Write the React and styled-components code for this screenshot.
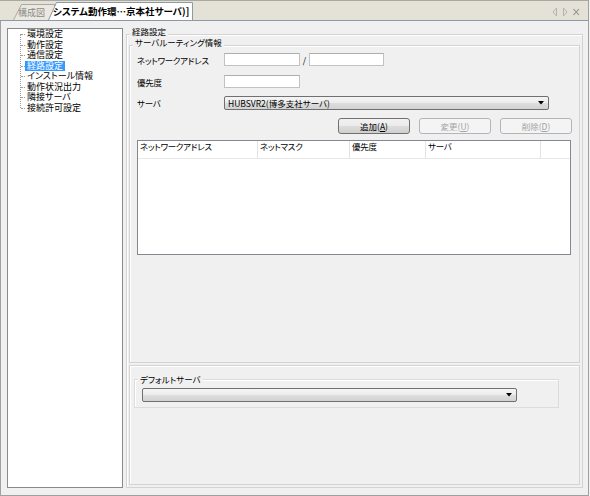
import styled, { createGlobalStyle } from "styled-components";

const GlobalStyle = createGlobalStyle`
  html, body {
    margin: 0;
    padding: 0;
    background: #f0f0f0;
  }
  body {
    font-family: "Noto Sans CJK JP", "Noto Sans", sans-serif;
    font-feature-settings: "palt";
    color: #000;
  }
  * { box-sizing: border-box; }
`;

const treeItems = [
  "環境設定",
  "動作設定",
  "通信設定",
  "経路設定",
  "インストール情報",
  "動作状況出力",
  "隣接サーバ",
  "接続許可設定",
];

const columns = ["ネットワークアドレス", "ネットマスク", "優先度", "サーバ", ""];

/* ── tab strip ── */
function TabShapeSvg({ width, height, fill, stroke }) {
  return (
    <TabShape width={width} height={height} viewBox={`0 0 ${width} ${height}`}>
      <path d={`M0.5 ${height} L8.5 0.5 H${width - 0.5} V${height} Z`} fill={fill} />
      <path
        d={`M0.5 ${height} L8.5 0.5 H${width - 0.5} V${height}`}
        fill="none"
        stroke={stroke}
      />
    </TabShape>
  );
}

function NavIcons() {
  return (
    <NavWrap width="30" height="10" viewBox="0 0 30 10">
      <path d="M4.5 1 L1 5 L4.5 9 Z" fill="none" stroke="#b4b4b4" />
      <path d="M11.5 1 L15 5 L11.5 9 Z" fill="none" stroke="#b4b4b4" />
      <path d="M21.5 2 L27 8 M27 2 L21.5 8" stroke="#8c8c8c" strokeWidth="1.1" />
    </NavWrap>
  );
}

function Arrow() {
  return (
    <ArrowSvg width="6" height="4" viewBox="0 0 6 4">
      <path d="M0 0 H6 L3 3.5 Z" fill="#000" />
    </ArrowSvg>
  );
}

export default function App() {
  return (
    <>
      <GlobalStyle />
      <Window>
        <TabStrip>
          <Tab $width={42}>
            <TabShapeSvg width={42} height={16} fill="#ebe9df" stroke="#a8a8a8" />
            <TabLabel>構成図</TabLabel>
          </Tab>
          <Tab $width={145} $active>
            <TabShapeSvg width={145} height={18} fill="#ffffff" stroke="#8d99a5" />
            <TabLabel>システム動作環…京本社サーバ)]</TabLabel>
          </Tab>
          <NavIcons />
        </TabStrip>

        <Body>
          <TreePane>
            <TreeList>
              {treeItems.map((item) => (
                <TreeItem key={item}>
                  <TreeLabel $selected={item === "経路設定"}>{item}</TreeLabel>
                </TreeItem>
              ))}
            </TreeList>
          </TreePane>

          <MainGroup>
            <GroupTitle $top={-9} $left={1}>経路設定</GroupTitle>

            <RoutingGroup>
              <GroupTitle $top={-9} $left={-4}>サーバルーティング情報</GroupTitle>

              <FormRow $gap={6}>
                <Label>ネットワークアドレス</Label>
                <TextBox />
                <Slash>/</Slash>
                <TextBox $width={75} />
              </FormRow>

              <FormRow $gap={9}>
                <Label>優先度</Label>
                <TextBox />
              </FormRow>

              <FormRow $gap={8}>
                <Label>サーバ</Label>
                <Select $width={325}>
                  HUBSVR2(博多支社サーバ)
                  <Arrow />
                </Select>
              </FormRow>

              <ButtonRow>
                <Button>
                  追加(<u>A</u>)
                </Button>
                <Button disabled>
                  変更(<u>U</u>)
                </Button>
                <Button disabled>
                  削除(<u>D</u>)
                </Button>
              </ButtonRow>

              <Table>
                <HeaderRow>
                  {columns.map((c, i) => (
                    <HeaderCell key={i}>{c}</HeaderCell>
                  ))}
                </HeaderRow>
              </Table>
            </RoutingGroup>

            <BottomPanel>
              <DefaultGroup>
                <GroupTitle $top={-6} $left={-4}>デフォルトサーバ</GroupTitle>
                <Select $width={375} $top={4}>
                  <Arrow />
                </Select>
              </DefaultGroup>
            </BottomPanel>
          </MainGroup>
        </Body>
      </Window>
    </>
  );
}

/* ── styled ── */
const Window = styled.div`
  width: 589px;
  height: 496px;
  display: flex;
  flex-direction: column;
  background: #f0f0f0;
`;

const TabStrip = styled.div`
  flex: none;
  height: 21px;
  display: flex;
  align-items: flex-end;
  padding-left: 13px;
  background: #e4e2d6;
  border-top: 1px solid #a9a8a2;
  border-bottom: 1px solid #8d99a5;
  border-right: 1px solid #a0a0a0;
`;

const Tab = styled.div`
  position: relative;
  width: ${(p) => p.$width}px;
  height: ${(p) => (p.$active ? 18 : 16)}px;
  margin-left: ${(p) => (p.$active ? -7 : 0)}px;
  padding: ${(p) => (p.$active ? "2px 0 0 5px" : "1px 0 0 5px")};
  display: flex;
  align-items: center;
  font-size: ${(p) => (p.$active ? 9.5 : 9)}px;
  font-weight: ${(p) => (p.$active ? 700 : 400)};
  color: ${(p) => (p.$active ? "#000" : "#8a8a8a")};
  z-index: ${(p) => (p.$active ? 2 : 1)};
  white-space: nowrap;
`;

const TabShape = styled.svg`
  position: absolute;
  left: 0;
  top: 0;
  overflow: visible;
`;

const TabLabel = styled.span`
  position: relative;
  line-height: 1;
`;

const NavWrap = styled.svg`
  margin-left: auto;
  margin-right: 6px;
  align-self: center;
  margin-top: 2px;
`;

const Body = styled.div`
  flex: 1;
  display: flex;
  gap: 3px;
  padding: 7px 5px 7px 6px;
  border: 1px solid #a0a0a0;
  border-top: none;
`;

const TreePane = styled.div`
  flex: none;
  width: 116px;
  background: #fff;
  border: 1px solid #8a8a8a;
  padding-left: 12px;
  font-size: 9px;
`;

const TreeList = styled.div`
  position: relative;

  &::before {
    content: "";
    position: absolute;
    left: 0;
    top: 5px;
    bottom: 5px;
    border-left: 1px dotted #9a9a9a;
  }
`;

const TreeItem = styled.div`
  position: relative;
  height: 10.5px;
  padding-left: 5px;
  display: flex;
  align-items: center;

  &::before {
    content: "";
    position: absolute;
    left: 1px;
    top: 50%;
    width: 4px;
    border-top: 1px dotted #9a9a9a;
  }
`;

const TreeLabel = styled.span`
  height: 10px;
  line-height: 10px;
  padding: 0 2px;
  white-space: nowrap;
  background: ${(p) => (p.$selected ? "#3399ff" : "transparent")};
  color: ${(p) => (p.$selected ? "#fff" : "#000")};
`;

const MainGroup = styled.div`
  flex: 1;
  margin-top: 6px;
  display: flex;
  flex-direction: column;
  padding: 0 2px 2px 2px;
  border: 1px solid #d3d3d3;
  box-shadow: inset 1px 1px 0 #fff;
  font-size: 8.5px;
`;

const GroupTitle = styled.div`
  width: fit-content;
  margin: ${(p) => p.$top}px 0 0 ${(p) => p.$left}px;
  padding: 0 2px;
  line-height: 10px;
  background: #f0f0f0;
  white-space: nowrap;
`;

const RoutingGroup = styled.div`
  flex: none;
  height: 318px;
  margin-top: 9px;
  display: flex;
  flex-direction: column;
  padding: 0 8px 0 7px;
  border: 1px solid #d3d3d3;
  box-shadow: inset 1px 1px 0 #fff;
`;

const FormRow = styled.div`
  display: flex;
  align-items: center;
  margin-top: ${(p) => p.$gap}px;
`;

const Label = styled.span`
  width: 87px;
  flex: none;
  line-height: 10px;
  white-space: nowrap;
  letter-spacing: -0.3px;
`;

const TextBox = styled.div`
  width: ${(p) => p.$width || 76}px;
  height: 13px;
  background: #fff;
  border: 1px solid #c2c2c2;
  border-top-color: #adadad;
`;

const Slash = styled.span`
  width: 9px;
  text-align: center;
  line-height: 10px;
`;

const Select = styled.div`
  width: ${(p) => p.$width}px;
  height: 14px;
  margin-top: ${(p) => p.$top || 0}px;
  display: flex;
  align-items: center;
  padding-left: 3px;
  line-height: 10px;
  white-space: nowrap;
  border: 1px solid #707070;
  border-radius: 2px;
  background: linear-gradient(#f4f4f4 0%, #ececec 50%, #dedede 51%, #d2d2d2 100%);
`;

const ArrowSvg = styled.svg`
  margin-left: auto;
  margin-right: 4px;
`;

const ButtonRow = styled.div`
  display: flex;
  justify-content: flex-end;
  gap: 9px;
  margin-top: 8px;
  margin-right: -1px;
`;

const Button = styled.button`
  width: 72px;
  height: 16px;
  padding: 0;
  display: flex;
  align-items: center;
  justify-content: center;
  font: inherit;
  line-height: 10px;
  border: 1px solid ${(p) => (p.disabled ? "#b3b6b8" : "#707070")};
  border-radius: 3px;
  background: ${(p) =>
    p.disabled
      ? "#f4f4f4"
      : "linear-gradient(#f2f2f2 0%, #ebebeb 50%, #dddddd 51%, #cfcfcf 100%)"};
  color: ${(p) => (p.disabled ? "#a3a3a3" : "#000")};

  u {
    text-underline-offset: 1px;
  }
`;

const Table = styled.div`
  margin-top: 6px;
  height: 115px;
  background: #fff;
  border: 1px solid #828790;
`;

const HeaderRow = styled.div`
  display: grid;
  grid-template-columns: 120px 92px 76px 115px 1fr;
  height: 18px;
  border-bottom: 1px solid #e8e8e8;
`;

const HeaderCell = styled.div`
  padding: 0 0 0 2px;
  line-height: 10px;
  white-space: nowrap;
  letter-spacing: -0.3px;
  border-right: 1px solid #e3e3e3;

  &:last-child {
    border-right: none;
  }
`;

const BottomPanel = styled.div`
  flex: 1;
  margin-top: 2px;
  display: flex;
  flex-direction: column;
  padding: 0 20px 0 4px;
  border: 1px solid #d3d3d3;
  box-shadow: inset 1px 1px 0 #fff;
`;

const DefaultGroup = styled.div`
  margin-top: 13px;
  display: flex;
  flex-direction: column;
  padding: 0 0 5px 7px;
  border: 1px solid #dcdcdc;
  box-shadow: inset 1px 1px 0 #fff;
`;
